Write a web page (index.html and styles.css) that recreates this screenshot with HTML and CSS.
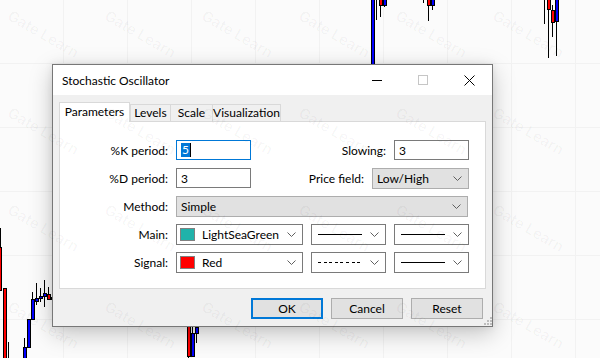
FILE: index.html
```html
<!DOCTYPE html>
<html lang="en">
<head>
    <meta charset="UTF-8">
    <title>Stochastic Oscillator</title>
    <link rel="stylesheet" href="styles.css">
</head>
<body>
    <div class="chart">
        <!-- candles behind the dialog -->
        <div class="body bull" style="left:371px;top:-1px;height:66px"></div>
        <div class="wick" style="left:376px;top:0;height:20px"></div>
        <div class="wick" style="left:380px;top:0;height:17px"></div>
        <div class="body bear" style="left:379px;top:-1px;height:7px"></div>
        <div class="wick" style="left:384px;top:0;height:7px"></div>
        <div class="body bull" style="left:383px;top:-1px;height:7px"></div>
        <div class="wick" style="left:423px;top:0;height:3px"></div>
        <div class="wick" style="left:428px;top:0;height:21px"></div>
        <div class="body bear" style="left:427px;top:-1px;height:7px"></div>
        <div class="wick" style="left:432px;top:0;height:10px"></div>
        <div class="body bull" style="left:431px;top:-1px;height:7px"></div>
        <div class="wick" style="left:544px;top:0;height:24px"></div>
        <div class="wick" style="left:548px;top:0;height:58px"></div>
        <div class="body bear" style="left:547px;top:-1px;height:11px"></div>
        <div class="wick" style="left:552px;top:5px;height:32px"></div>
        <div class="body bear" style="left:551px;top:10px;height:13px"></div>
        <div class="wick" style="left:556px;top:0;height:56px"></div>
        <div class="body bull" style="left:555px;top:-1px;height:23px"></div>

        <div class="wick" style="left:0;top:228px;height:20px"></div>
        <div class="body bear" style="left:-2px;top:247px;height:44px"></div>
        <div class="body bear" style="left:3px;top:288px;height:71px"></div>
        <div class="wick" style="left:8px;top:342px;height:16px"></div>
        <div class="wick" style="left:24px;top:338px;height:20px"></div>
        <div class="body bull" style="left:23px;top:347px;height:12px"></div>
        <div class="body bull" style="left:27px;top:319px;height:29px"></div>
        <div class="wick" style="left:32px;top:292px;height:28px"></div>
        <div class="body bull" style="left:31px;top:299px;height:21px"></div>
        <div class="wick" style="left:36px;top:283px;height:22px"></div>
        <div class="body bull" style="left:35px;top:298px;height:4px"></div>
        <div class="wick" style="left:40px;top:288px;height:14px"></div>
        <div class="body bull" style="left:39px;top:296px;height:3px"></div>
        <div class="wick" style="left:44px;top:280px;height:27px"></div>
        <div class="body bull" style="left:43px;top:293px;height:4px"></div>
        <div class="wick" style="left:48px;top:287px;height:13px"></div>
        <div class="body bear" style="left:47px;top:294px;height:6px"></div>
        <div class="body bull" style="left:51px;top:297px;height:3px"></div>

        <div class="wick" style="left:188px;top:340px;height:18px"></div>
        <div class="body bear" style="left:187px;top:326px;height:31px"></div>
        <div class="wick" style="left:192px;top:327px;height:8px"></div>
        <div class="body bull" style="left:191px;top:333px;height:24px"></div>
        <div class="wick" style="left:196px;top:327px;height:16px"></div>
        <div class="body bull" style="left:195px;top:327px;height:7px"></div>

        <div class="window">
            <div class="titlebar">
                <span class="title">Stochastic Oscillator</span>
                <div class="caption">
                    <span class="cap-btn">
                        <svg width="10" height="10" viewBox="0 0 10 10"><path d="M0 5.5h10" stroke="#000" stroke-width="1"/></svg>
                    </span>
                    <span class="cap-btn">
                        <svg width="10" height="10" viewBox="0 0 10 10"><rect x="0.5" y="0.5" width="9" height="9" fill="none" stroke="#c6c6c6"/></svg>
                    </span>
                    <span class="cap-btn">
                        <svg width="11" height="11" viewBox="0 0 11 11"><path d="M0.5 0.5l10 10M10.5 0.5l-10 10" stroke="#000" stroke-width="1"/></svg>
                    </span>
                </div>
            </div>

            <div class="client">
                <div class="tabs">
                    <span class="tab active" style="width:71px">Parameters</span>
                    <span class="tab" style="width:41px">Levels</span>
                    <span class="tab" style="width:43px">Scale</span>
                    <span class="tab" style="width:69px">Visualization</span>
                </div>

                <div class="panel">
                    <div class="row">
                        <label class="lbl">%K period:</label>
                        <div class="edit focus w75"><span class="selected">5</span><span class="caret"></span></div>
                        <div class="right">
                            <label>Slowing:</label>
                            <div class="edit w75">3</div>
                        </div>
                    </div>
                    <div class="row">
                        <label class="lbl">%D period:</label>
                        <div class="edit w75">3</div>
                        <div class="right">
                            <label>Price field:</label>
                            <div class="select w97">
                                <span>Low/High</span>
                                <svg class="chev" width="9" height="5" viewBox="0 0 9 5"><path d="M0.5 0.5l4 4 4-4" fill="none" stroke="#606060"/></svg>
                            </div>
                        </div>
                    </div>
                    <div class="row">
                        <label class="lbl">Method:</label>
                        <div class="select w292">
                            <span>Simple</span>
                            <svg class="chev" width="9" height="5" viewBox="0 0 9 5"><path d="M0.5 0.5l4 4 4-4" fill="none" stroke="#606060"/></svg>
                        </div>
                    </div>
                    <div class="row">
                        <label class="lbl">Main:</label>
                        <div class="combo w127">
                            <span class="swatch sea"></span>
                            <span class="name">LightSeaGreen</span>
                            <svg class="chev" width="9" height="5" viewBox="0 0 9 5"><path d="M0.5 0.5l4 4 4-4" fill="none" stroke="#606060"/></svg>
                        </div>
                        <div class="combo w75 gap">
                            <span class="line"></span>
                            <svg class="chev" width="9" height="5" viewBox="0 0 9 5"><path d="M0.5 0.5l4 4 4-4" fill="none" stroke="#606060"/></svg>
                        </div>
                        <div class="combo w75 gap">
                            <span class="line"></span>
                            <svg class="chev" width="9" height="5" viewBox="0 0 9 5"><path d="M0.5 0.5l4 4 4-4" fill="none" stroke="#606060"/></svg>
                        </div>
                    </div>
                    <div class="row">
                        <label class="lbl">Signal:</label>
                        <div class="combo w127">
                            <span class="swatch red"></span>
                            <span class="name">Red</span>
                            <svg class="chev" width="9" height="5" viewBox="0 0 9 5"><path d="M0.5 0.5l4 4 4-4" fill="none" stroke="#606060"/></svg>
                        </div>
                        <div class="combo w75 gap">
                            <span class="line dashed"></span>
                            <svg class="chev" width="9" height="5" viewBox="0 0 9 5"><path d="M0.5 0.5l4 4 4-4" fill="none" stroke="#606060"/></svg>
                        </div>
                        <div class="combo w75 gap">
                            <span class="line"></span>
                            <svg class="chev" width="9" height="5" viewBox="0 0 9 5"><path d="M0.5 0.5l4 4 4-4" fill="none" stroke="#606060"/></svg>
                        </div>
                    </div>
                </div>

                <div class="buttons">
                    <button class="btn default">OK</button>
                    <button class="btn">Cancel</button>
                    <button class="btn">Reset</button>
                </div>

                <svg class="grip" width="8" height="8" viewBox="0 0 8 8" fill="#bdbdbd">
                    <rect x="6" y="0" width="2" height="2"/>
                    <rect x="3" y="3" width="2" height="2"/>
                    <rect x="6" y="3" width="2" height="2"/>
                    <rect x="0" y="6" width="2" height="2"/>
                    <rect x="3" y="6" width="2" height="2"/>
                    <rect x="6" y="6" width="2" height="2"/>
                </svg>
            </div>
        </div>

        <div class="watermarks">
            <span class="wm">Gate Learn</span><span class="wm">Gate Learn</span><span class="wm">Gate Learn</span><span class="wm">Gate Learn</span><span class="wm">Gate Learn</span><span class="wm">Gate Learn</span>
            <span class="wm">Gate Learn</span><span class="wm">Gate Learn</span><span class="wm">Gate Learn</span><span class="wm">Gate Learn</span><span class="wm">Gate Learn</span><span class="wm">Gate Learn</span>
            <span class="wm">Gate Learn</span><span class="wm">Gate Learn</span><span class="wm">Gate Learn</span><span class="wm">Gate Learn</span><span class="wm">Gate Learn</span><span class="wm">Gate Learn</span>
            <span class="wm">Gate Learn</span><span class="wm">Gate Learn</span><span class="wm">Gate Learn</span><span class="wm">Gate Learn</span><span class="wm">Gate Learn</span><span class="wm">Gate Learn</span>
        </div>
    </div>
</body>
</html>
```

FILE: styles.css
```css
* {
    margin: 0;
    padding: 0;
    box-sizing: border-box;
}
body {
    width: 600px;
    height: 358px;
    overflow: hidden;
    font-family: 'Lato', 'Noto Sans', sans-serif;
    font-size: 12px;
    color: #000;
}
.chart {
    position: relative;
    width: 600px;
    height: 358px;
    overflow: hidden;
    background-color: #fbfbfb;
    background-image:
        repeating-linear-gradient(90deg, transparent 0 63px, #f2f2f2 63px 64px),
        repeating-linear-gradient(180deg, transparent 0 63px, #f2f2f2 63px 64px);
}

/* candles */
.wick {
    position: absolute;
    width: 1px;
    background: #000;
}
.body {
    position: absolute;
    width: 4px;
    border: 1px solid #000;
}
.bull {
    background: #0000ff;
}
.bear {
    background: #ff0000;
}

/* dialog window */
.window {
    position: absolute;
    left: 52px;
    top: 64px;
    width: 441px;
    height: 263px;
    display: flex;
    flex-direction: column;
    background: #f0f0f0;
    border: 1px solid #777;
    box-shadow: 0 7px 22px rgba(0, 0, 0, 0.22), 0 0 8px rgba(0, 0, 0, 0.08);
}
.titlebar {
    height: 30px;
    display: flex;
    align-items: center;
    background: #fff;
}
.title {
    flex: 1;
    padding-left: 9px;
}
.caption {
    display: flex;
    height: 100%;
}
.cap-btn {
    width: 46px;
    display: flex;
    align-items: center;
    justify-content: center;
}
.client {
    flex: 1;
    position: relative;
    padding: 7px 6px 0;
}

/* tabs */
.tabs {
    display: flex;
    align-items: flex-end;
    height: 19px;
    position: relative;
    z-index: 1;
}
.tab {
    height: 17px;
    margin-left: -1px;
    border: 1px solid #d9d9d9;
    border-bottom: none;
    background: #f0f0f0;
    text-align: center;
    line-height: 15px;
}
.tab.active {
    height: 20px;
    margin-left: 0;
    margin-bottom: -1px;
    margin-right: 1px;
    background: #fff;
    line-height: 18px;
    position: relative;
    z-index: 2;
}
.panel {
    height: 168px;
    background: #fff;
    border: 1px solid #d9d9d9;
    padding: 18px 16px 0 0;
}

/* rows of fields */
.row {
    display: flex;
    align-items: center;
    height: 20px;
    margin-bottom: 8px;
}
.lbl {
    width: 108px;
    margin-right: 8px;
    text-align: right;
}
.right {
    margin-left: auto;
    display: flex;
    align-items: center;
    gap: 8px;
}
.w75 { width: 75px; }
.w97 { width: 97px; }
.w127 { width: 127px; }
.w292 { width: 292px; }
.gap { margin-left: 8px; }

.edit {
    height: 20px;
    display: flex;
    align-items: center;
    padding-left: 4px;
    background: #fff;
    border: 1px solid #7a7a7a;
}
.edit.focus {
    border-color: #0078d7;
}
.selected {
    background: #0078d7;
    color: #fff;
    line-height: 14px;
    padding: 0 1px;
}
.caret {
    width: 1px;
    height: 14px;
    background: #000;
}
.select, .combo {
    height: 21px;
    display: flex;
    align-items: center;
    padding: 0 6px 0 4px;
    border: 1px solid #adadad;
    background: #e1e1e1;
}
.select span {
    flex: 1;
}
.combo {
    background: #fff;
    border-color: #7a7a7a;
    padding-left: 3px;
}
.chev {
    margin-left: auto;
}
.swatch {
    width: 15px;
    height: 13px;
    margin-right: 7px;
    border: 1px solid #808080;
}
.sea { background: #20b2aa; }
.red { background: #ff0000; }
.line {
    width: 44px;
    height: 1px;
    margin-left: 3px;
    background: #000;
}
.line.dashed {
    background: repeating-linear-gradient(90deg, #000 0 3px, transparent 3px 5.6px);
}

/* bottom buttons */
.buttons {
    display: flex;
    justify-content: flex-end;
    gap: 8px;
    margin-top: 9px;
    padding-right: 3px;
}
.btn {
    width: 72px;
    height: 21px;
    font: inherit;
    color: #000;
    background: #e1e1e1;
    border: 1px solid #adadad;
}
.btn.default {
    border: 2px solid #0078d7;
}
.grip {
    position: absolute;
    right: 0;
    bottom: 1px;
}

/* watermark layer */
.watermarks {
    position: absolute;
    inset: 0;
    z-index: 5;
    pointer-events: none;
    display: grid;
    grid-template-columns: repeat(6, 97px);
    grid-auto-rows: 97px;
    padding: 6px 0 0 14px;
}
.wm {
    transform-origin: left top;
    transform: rotate(30deg);
    white-space: nowrap;
    font-family: 'Inter', sans-serif;
    font-size: 15px;
    font-weight: 600;
    color: rgba(0, 0, 0, 0.035);
}
```
